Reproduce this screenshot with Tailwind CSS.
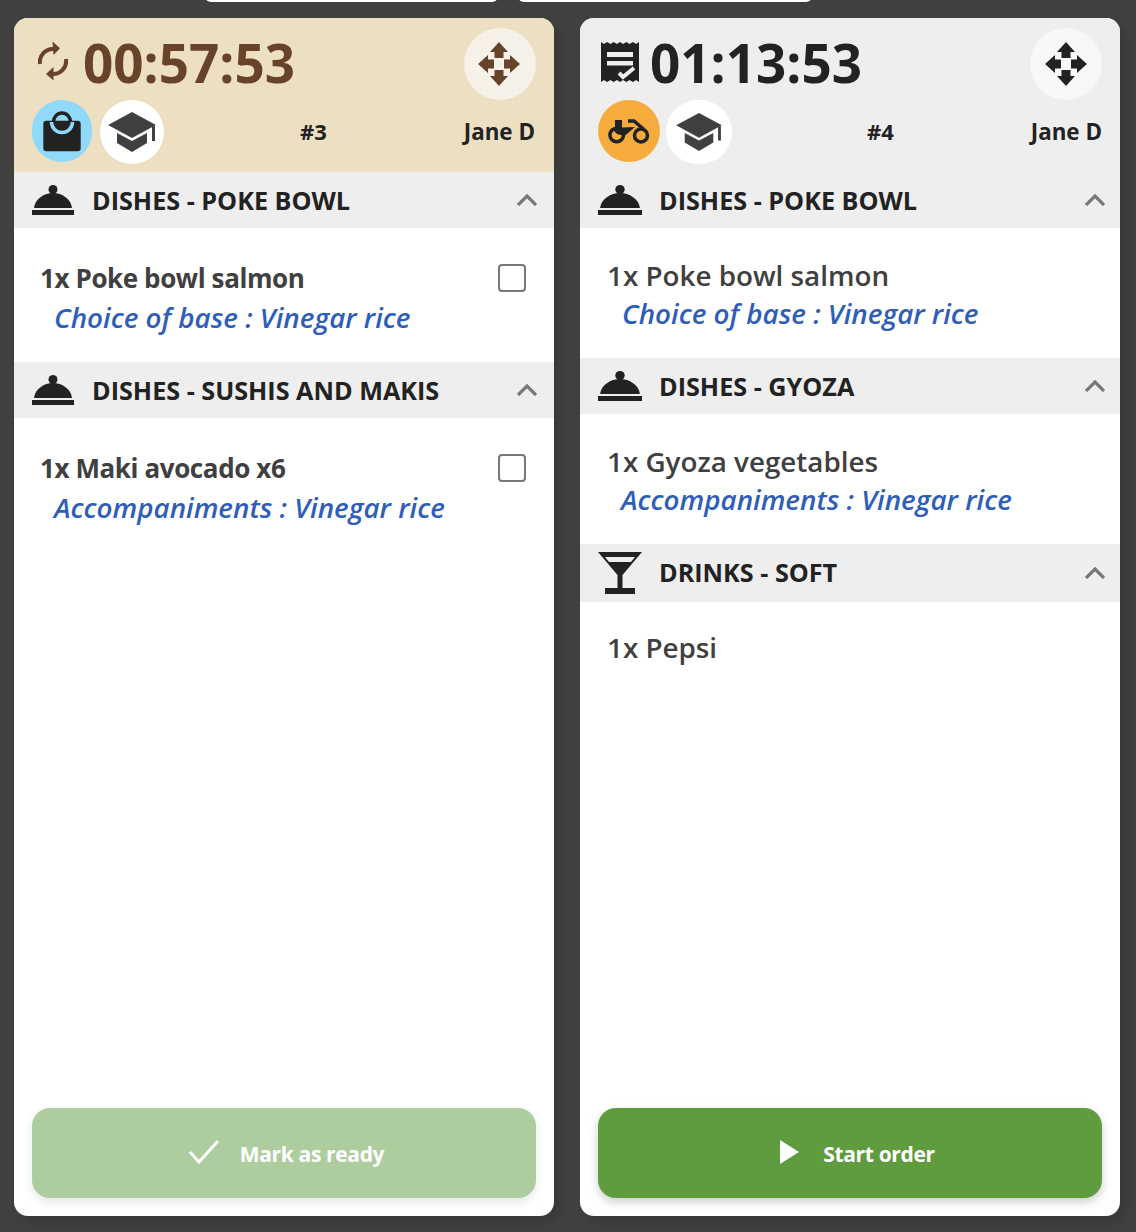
<!DOCTYPE html>
<html lang="en">
<head>
    <meta charset="UTF-8">
    <meta name="viewport" content="width=device-width, initial-scale=1.0">
    <title>Kitchen orders</title>
    <script src="https://cdn.jsdelivr.net/npm/@tailwindcss/browser@4"></script>
</head>
<body class="bg-[#404040] font-['Open_Sans',sans-serif] text-[#222]">
    <div class="relative w-[1136px] h-[1232px] overflow-hidden flex gap-[26px] pl-[14px] pt-[18px]">
        <!-- Cards peeking from the row above -->
        <div class="absolute left-[205px] -top-[10px] w-[293px] h-[12px] bg-white rounded-[8px]"></div>
        <div class="absolute left-[518px] -top-[10px] w-[294px] h-[12px] bg-white rounded-[8px]"></div>

        <!-- Order 3 -->
        <div class="w-[540px] h-[1198px] bg-white rounded-[14px] overflow-hidden flex flex-col shadow-[6px_6px_10px_rgba(0,0,0,0.12)]">
            <div class="h-[154px] bg-[#ecdfc2] px-[18px] pt-[10px] shrink-0">
                <div class="flex items-center h-[72px]">
                    <svg class="w-[30px] h-[42px] ml-[6px] mb-[4px]" viewBox="0 0 30 42" fill="none" stroke="#68432a" stroke-width="4">
                        <path d="M2 23 A13 13 0 0 1 16 8"/>
                        <path d="M28 18 A13 13 0 0 1 14 33"/>
                        <path d="M14.5 0.5 L22 7.3 L15.5 14 Z" fill="#68432a" stroke="none"/>
                        <path d="M8 33 L15.5 26 L15.5 39.5 Z" fill="#68432a" stroke="none"/>
                    </svg>
                    <span class="ml-[15px] mb-[4px] text-[53px] leading-none font-bold text-[#68432a]">00:57:53</span>
                    <div class="ml-auto w-[72px] h-[72px] rounded-full bg-[#f6f2e9] flex items-center justify-center">
                        <svg class="w-[42px] h-[44px] mr-[2px]" viewBox="0 0 42 44" fill="#68432a">
                            <path d="M21 0 L30 10 L25.5 10 L25.5 16 L16.5 16 L16.5 10 L12 10 Z"/>
                            <path d="M21 44 L30 34 L25.5 34 L25.5 28 L16.5 28 L16.5 34 L12 34 Z"/>
                            <path d="M0 22 L10 13 L10 17.5 L16 17.5 L16 26.5 L10 26.5 L10 31 Z"/>
                            <path d="M42 22 L32 13 L32 17.5 L26 17.5 L26 26.5 L32 26.5 L32 31 Z"/>
                        </svg>
                    </div>
                </div>
                <div class="flex items-center h-[64px] relative">
                    <div class="w-[60px] h-[62px] mb-[2px] rounded-full bg-[#8fd9fb] flex items-center justify-center">
                        <svg class="w-[38px] h-[42px]" viewBox="0 0 38 42">
                            <path d="M10.5 12 A8.5 9 0 0 1 27.5 12" fill="none" stroke="#222" stroke-width="3.5"/>
                            <rect x="0.3" y="10.7" width="37.4" height="30.6" rx="3" fill="#222"/>
                            <path d="M8.5 12 A10.5 10.5 0 0 0 29.5 12" fill="none" stroke="#8fd9fb" stroke-width="3.5"/>
                        </svg>
                    </div>
                    <div class="ml-[8px] w-[64px] h-[64px] rounded-full bg-white flex items-center justify-center">
                        <svg class="w-[48px] h-[42px]" viewBox="0 0 48 42" fill="#404040">
                            <path d="M24 1 L48 14 L24 27 L0 14 Z"/>
                            <path d="M9 22 L24 30 L39 22 V32 L24 41 L9 32 Z"/>
                            <rect x="44" y="15" width="3" height="15"/>
                        </svg>
                    </div>
                    <span class="absolute left-[268px] top-[16px] text-[22px] leading-[30px] font-bold">#3</span>
                    <span class="ml-auto mr-[1px] text-[22.4px] leading-[30px] font-bold">Jane D</span>
                </div>
            </div>

            <div class="h-[56px] bg-[#eeeeee] flex items-center pl-[18px] pr-[17px] shrink-0">
                <svg class="w-[42px] h-[30px]" viewBox="0 0 42 30" fill="#222">
                    <circle cx="21" cy="4.5" r="4.5"/>
                    <path d="M2 23 C3 14 12 8 21 8 C30 8 39 14 40 23 Z"/>
                    <rect x="0" y="25" width="42" height="5"/>
                </svg>
                <span class="ml-[18px] mt-[2px] text-[25.2px] font-bold">DISHES - POKE BOWL</span>
                <svg class="ml-auto w-[20px] h-[12px]" viewBox="0 0 20 12" fill="none" stroke="#777" stroke-width="3.2"><path d="M1 11 L10 2 L19 11"/></svg>
            </div>
            <div class="h-[134px] pl-[26px] pr-[28px] pt-[32px] relative shrink-0">
                <div class="text-[26px] leading-[36px] font-bold text-[#404040] tracking-[-0.4px]">1x Poke bowl salmon</div>
                <div class="pl-[14px] text-[27.8px] leading-[42px] font-semibold italic text-[#2e5eb9]">Choice of base : Vinegar rice</div>
                <div class="absolute right-[28px] top-[36px] w-[28px] h-[28px] rounded-[4px] border-2 border-[#777] bg-white"></div>
            </div>

            <div class="h-[56px] bg-[#eeeeee] flex items-center pl-[18px] pr-[17px] shrink-0">
                <svg class="w-[42px] h-[30px]" viewBox="0 0 42 30" fill="#222">
                    <circle cx="21" cy="4.5" r="4.5"/>
                    <path d="M2 23 C3 14 12 8 21 8 C30 8 39 14 40 23 Z"/>
                    <rect x="0" y="25" width="42" height="5"/>
                </svg>
                <span class="ml-[18px] mt-[2px] text-[25.2px] font-bold">DISHES - SUSHIS AND MAKIS</span>
                <svg class="ml-auto w-[20px] h-[12px]" viewBox="0 0 20 12" fill="none" stroke="#777" stroke-width="3.2"><path d="M1 11 L10 2 L19 11"/></svg>
            </div>
            <div class="flex-1 pl-[26px] pr-[28px] pt-[32px] relative">
                <div class="text-[26px] leading-[36px] font-bold text-[#404040] tracking-[-0.4px]">1x Maki avocado x6</div>
                <div class="pl-[14px] text-[27.8px] leading-[42px] font-semibold italic text-[#2e5eb9]">Accompaniments : Vinegar rice</div>
                <div class="absolute right-[28px] top-[36px] w-[28px] h-[28px] rounded-[4px] border-2 border-[#777] bg-white"></div>
            </div>

            <div class="shrink-0 px-[18px] pb-[18px]">
                <div class="h-[90px] pl-[4px] rounded-[18px] bg-[#aecd9f] flex items-center justify-center text-white shadow-[0_4px_10px_rgba(0,0,0,0.1)]">
                    <svg class="w-[32px] h-[26px] mr-[20px] -mt-[2px]" viewBox="0 0 32 26" fill="none" stroke="#fff" stroke-width="3"><path d="M2 13 L11 23 L30 2"/></svg>
                    <span class="mt-[4px] text-[21px] font-bold tracking-[-0.35px]">Mark as ready</span>
                </div>
            </div>
        </div>

        <!-- Order 4 -->
        <div class="w-[540px] h-[1198px] bg-white rounded-[14px] overflow-hidden flex flex-col shadow-[6px_6px_10px_rgba(0,0,0,0.12)]">
            <div class="h-[154px] bg-[#eeeeee] px-[18px] pt-[10px] shrink-0">
                <div class="flex items-center h-[72px]">
                    <svg class="w-[38px] h-[40px] ml-[3px] mb-[4px]" viewBox="0 0 38 40">
                        <path d="M0 0 L3 2 L6 0 L9.5 2 L12.5 0 L16 2 L19 0 L22 2 L25.5 0 L28.5 2 L32 0 L35 2 L38 0 V40 L35 38 L32 40 L28.5 38 L25.5 40 L22 38 L19 40 L16 38 L12.5 40 L9.5 38 L6 40 L3 38 L0 40 Z" fill="#222"/>
                        <rect x="6" y="10" width="26" height="5" fill="#eee"/>
                        <rect x="6" y="19" width="26" height="4.5" fill="#eee"/>
                        <path d="M18 31 L22 35 L33 26" fill="none" stroke="#eee" stroke-width="4"/>
                    </svg>
                    <span class="ml-[11px] mb-[4px] text-[53px] leading-none font-bold text-[#222]">01:13:53</span>
                    <div class="ml-auto w-[72px] h-[72px] rounded-full bg-[#f8f8f8] flex items-center justify-center">
                        <svg class="w-[42px] h-[44px]" viewBox="0 0 42 44" fill="#222">
                            <path d="M21 0 L30 10 L25.5 10 L25.5 16 L16.5 16 L16.5 10 L12 10 Z"/>
                            <path d="M21 44 L30 34 L25.5 34 L25.5 28 L16.5 28 L16.5 34 L12 34 Z"/>
                            <path d="M0 22 L10 13 L10 17.5 L16 17.5 L16 26.5 L10 26.5 L10 31 Z"/>
                            <path d="M42 22 L32 13 L32 17.5 L26 17.5 L26 26.5 L32 26.5 L32 31 Z"/>
                        </svg>
                    </div>
                </div>
                <div class="flex items-center h-[64px] relative">
                    <div class="w-[62px] h-[62px] mb-[2px] rounded-full bg-[#f5ac3c] flex items-center justify-center">
                        <svg class="w-[42px] h-[25px]" viewBox="0 0 42 25" fill="none" stroke="#222" stroke-width="3.5">
                            <circle cx="8.7" cy="16" r="6.8"/>
                            <circle cx="33" cy="16.5" r="6.5"/>
                            <path d="M20 2 H26 L36 10.5"/>
                            <rect x="7" y="1" width="7" height="8" fill="#222" stroke="none"/>
                            <path d="M3 9 L27 8 L16.5 17 L9 15 Z" fill="#222" stroke="none"/>
                        </svg>
                    </div>
                    <div class="ml-[6px] w-[66px] h-[64px] rounded-full bg-white flex items-center justify-center">
                        <svg class="w-[46px] h-[40px]" viewBox="0 0 48 42" fill="#404040">
                            <path d="M24 1 L48 14 L24 27 L0 14 Z"/>
                            <path d="M9 22 L24 30 L39 22 V32 L24 41 L9 32 Z"/>
                            <rect x="44" y="15" width="3" height="15"/>
                        </svg>
                    </div>
                    <span class="absolute left-[269px] top-[16px] text-[22px] leading-[30px] font-bold">#4</span>
                    <span class="ml-auto text-[22.4px] leading-[30px] font-bold">Jane D</span>
                </div>
            </div>

            <div class="h-[56px] bg-[#eeeeee] flex items-center pl-[18px] pr-[15px] shrink-0">
                <svg class="w-[44px] h-[30px]" viewBox="0 0 42 30" preserveAspectRatio="none" fill="#222">
                    <circle cx="21" cy="4.5" r="4.5"/>
                    <path d="M2 23 C3 14 12 8 21 8 C30 8 39 14 40 23 Z"/>
                    <rect x="0" y="25" width="42" height="5"/>
                </svg>
                <span class="ml-[17px] mt-[2px] text-[25.2px] font-bold">DISHES - POKE BOWL</span>
                <svg class="ml-auto w-[20px] h-[12px]" viewBox="0 0 20 12" fill="none" stroke="#777" stroke-width="3.2"><path d="M1 11 L10 2 L19 11"/></svg>
            </div>
            <div class="h-[130px] pl-[27px] pt-[29px] shrink-0">
                <div class="text-[27.8px] leading-[36px] font-semibold text-[#404040]">1x Poke bowl salmon</div>
                <div class="pl-[15px] text-[27.8px] leading-[40px] font-semibold italic text-[#2e5eb9]">Choice of base : Vinegar rice</div>
            </div>

            <div class="h-[56px] bg-[#eeeeee] flex items-center pl-[18px] pr-[15px] shrink-0">
                <svg class="w-[44px] h-[30px]" viewBox="0 0 42 30" preserveAspectRatio="none" fill="#222">
                    <circle cx="21" cy="4.5" r="4.5"/>
                    <path d="M2 23 C3 14 12 8 21 8 C30 8 39 14 40 23 Z"/>
                    <rect x="0" y="25" width="42" height="5"/>
                </svg>
                <span class="ml-[17px] mt-[2px] text-[25.2px] font-bold">DISHES - GYOZA</span>
                <svg class="ml-auto w-[20px] h-[12px]" viewBox="0 0 20 12" fill="none" stroke="#777" stroke-width="3.2"><path d="M1 11 L10 2 L19 11"/></svg>
            </div>
            <div class="h-[130px] pl-[27px] pt-[29px] shrink-0">
                <div class="text-[27.8px] leading-[36px] font-semibold text-[#404040]">1x Gyoza vegetables</div>
                <div class="pl-[14px] text-[27.8px] leading-[40px] font-semibold italic text-[#2e5eb9]">Accompaniments : Vinegar rice</div>
            </div>

            <div class="h-[58px] bg-[#eeeeee] flex items-center pl-[18px] pr-[15px] shrink-0">
                <svg class="w-[44px] h-[42px]" viewBox="0 0 44 42" fill="#222">
                    <path d="M0 0 H44 L24.5 23 V36 H37 V42 H7 V36 H19.5 V23 Z M7 5 L11 10 H33 L37 5 Z" fill-rule="evenodd"/>
                </svg>
                <span class="ml-[17px] text-[25.2px] font-bold">DRINKS - SOFT</span>
                <svg class="ml-auto w-[20px] h-[12px]" viewBox="0 0 20 12" fill="none" stroke="#777" stroke-width="3.2"><path d="M1 11 L10 2 L19 11"/></svg>
            </div>
            <div class="flex-1 pl-[27px] pt-[27px]">
                <div class="text-[27.8px] leading-[36px] font-semibold text-[#404040]">1x Pepsi</div>
            </div>

            <div class="shrink-0 px-[18px] pb-[18px]">
                <div class="h-[90px] pl-[14px] rounded-[18px] bg-[#5e9c3f] flex items-center justify-center text-white shadow-[0_4px_10px_rgba(0,0,0,0.2)]">
                    <svg class="w-[20px] h-[24px] mr-[24px] -mt-[2px]" viewBox="0 0 20 24" fill="#fff"><path d="M1 0 L20 12 L1 24 Z"/></svg>
                    <span class="mt-[4px] text-[21px] font-bold tracking-[-0.35px]">Start order</span>
                </div>
            </div>
        </div>
    </div>
</body>
</html>
